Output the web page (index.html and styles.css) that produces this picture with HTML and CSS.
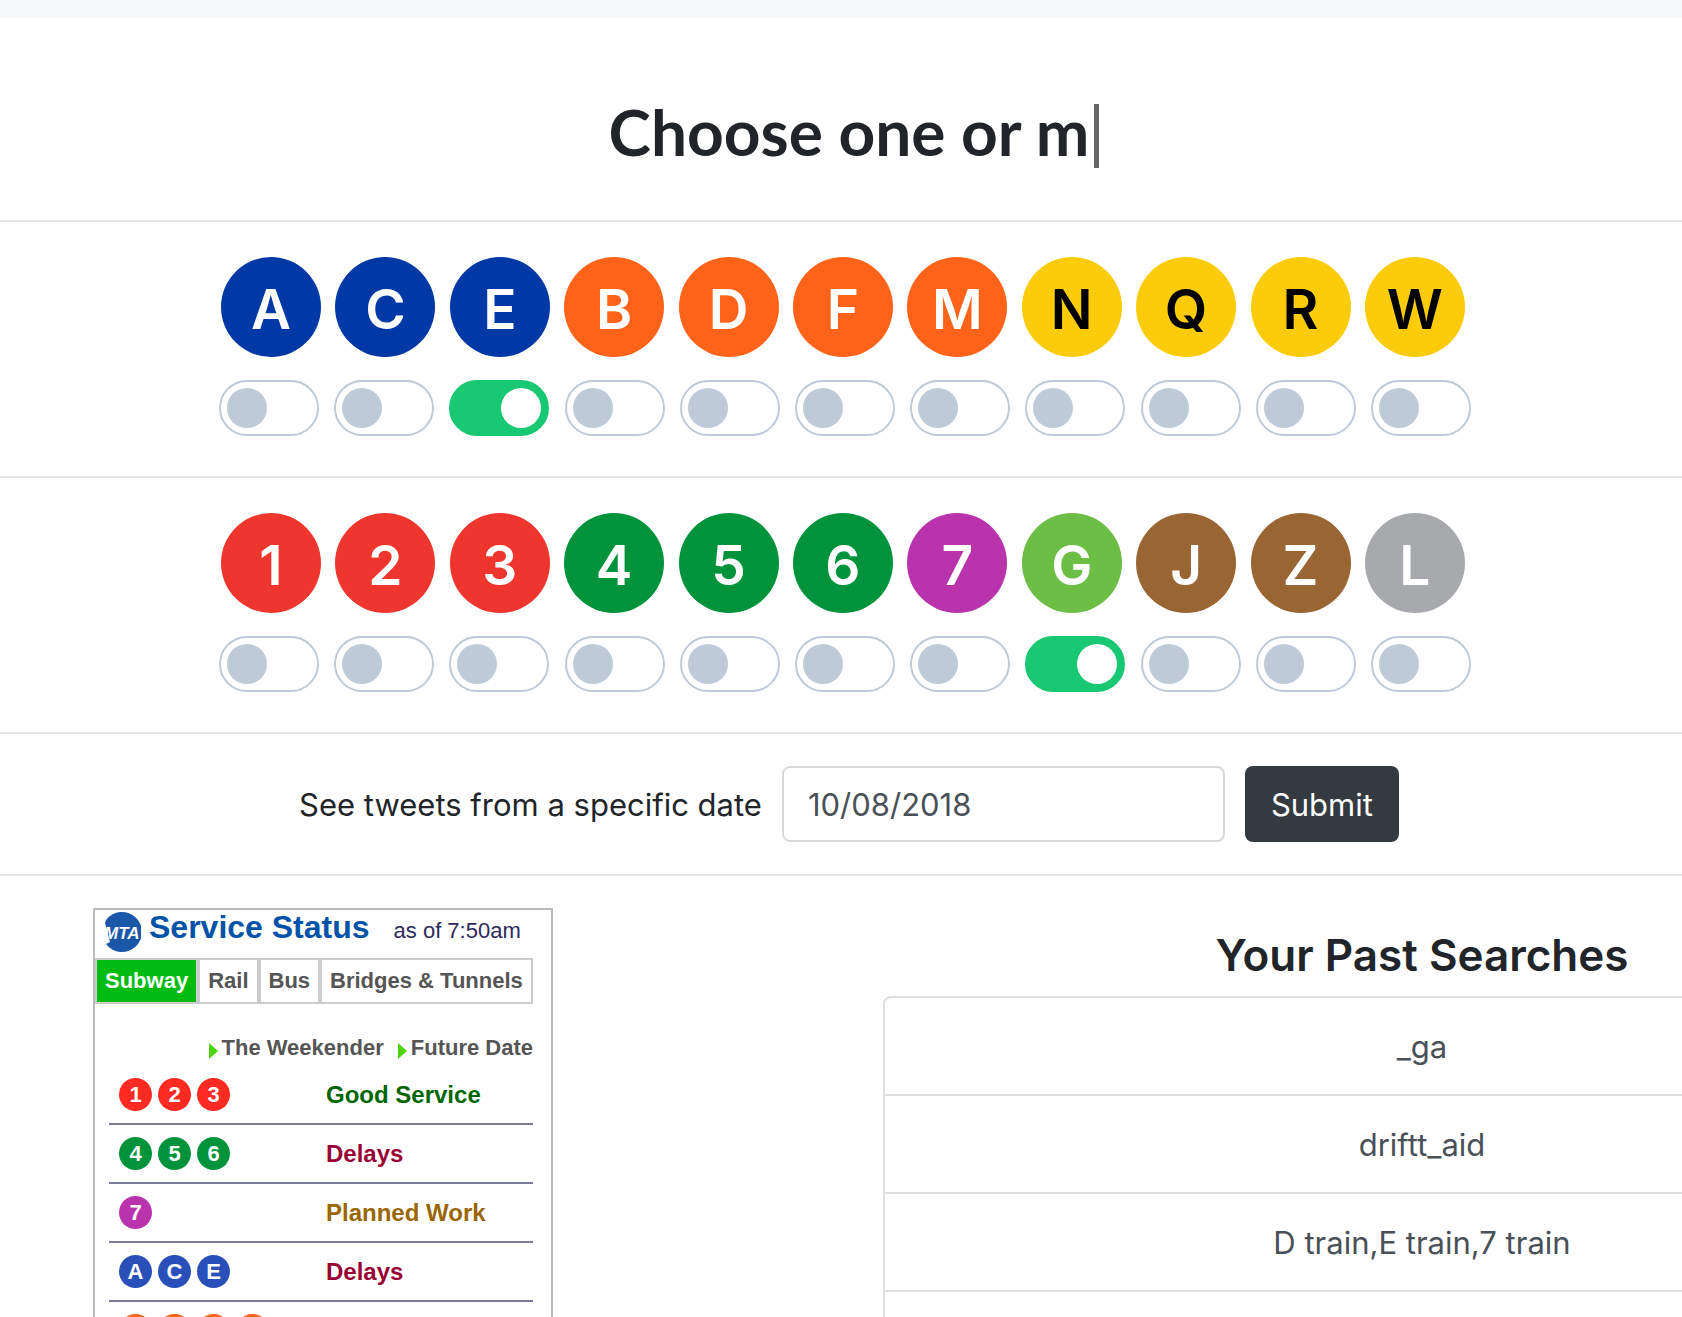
FILE: index.html
```html
<!DOCTYPE html>
<html lang="en">
<head>
    <meta charset="UTF-8">
    <meta name="viewport" content="width=device-width, initial-scale=1.0">
    <title>Train Tweets</title>
    <link rel="stylesheet" href="styles.css">
</head>
<body>
    <div class="topbar"></div>

    <header class="intro">
        <h1>Choose one or m<span class="cursor"></span></h1>
    </header>

    <form>
        <section class="trains" id="letters"></section>
        <section class="trains" id="numbers"></section>

        <section class="date-search">
            <label for="date">See tweets from a specific date</label>
            <input type="text" id="date" value="10/08/2018">
            <button type="submit">Submit</button>
        </section>
    </form>

    <main class="results">
        <div class="status">
            <div class="status-head">
                <svg class="logo" viewBox="0 0 38 42" role="img" aria-label="MTA">
                    <path d="M3 9A20 20 0 1 1 3 33L7 31L2 12Z" fill="#1b57a8"/>
                    <text x="1" y="28" class="logo-text">MTA</text>
                </svg>
                <h2>Service Status</h2>
                <span class="as-of">as of 7:50am</span>
            </div>
            <nav class="tabs">
                <a href="#subway" class="active">Subway</a>
                <a href="#rail">Rail</a>
                <a href="#bus">Bus</a>
                <a href="#bridges">Bridges &amp; Tunnels</a>
            </nav>
            <div class="links">
                <a href="#weekender">The Weekender</a>
                <a href="#future">Future Date</a>
            </div>
            <ul class="lines" id="lines"></ul>
        </div>

        <div class="searches">
            <h2>Your Past Searches</h2>
            <ul>
                <li><a href="#">_ga</a></li>
                <li><a href="#">driftt_aid</a></li>
                <li><a href="#">D train,E train,7 train</a></li>
                <li></li>
            </ul>
        </div>
    </main>

    <script>
        const colors = {
            A: 'blue', C: 'blue', E: 'blue',
            B: 'orange', D: 'orange', F: 'orange', M: 'orange',
            N: 'yellow', Q: 'yellow', R: 'yellow', W: 'yellow',
            1: 'red', 2: 'red', 3: 'red',
            4: 'green', 5: 'green', 6: 'green',
            7: 'purple', G: 'lime', J: 'brown', Z: 'brown', L: 'gray'
        };
        const selected = ['E', 'G'];

        const statuses = [
            { trains: '123', text: 'Good Service', type: 'good' },
            { trains: '456', text: 'Delays', type: 'delays' },
            { trains: '7', text: 'Planned Work', type: 'planned' },
            { trains: 'ACE', text: 'Delays', type: 'delays' },
            { trains: 'BDFM', text: '', type: 'good' }
        ];

        function showTrains(id, trains) {
            const names = trains.split('');
            document.getElementById(id).innerHTML = `
                <div class="bullets">
                    ${names.map(t => `<label class="bullet ${colors[t]}" for="train-${t}">${t}</label>`).join('')}
                </div>
                <div class="switches">
                    ${names.map(t => `<input type="checkbox" class="switch" id="train-${t}" ${selected.includes(t) ? 'checked' : ''}>`).join('')}
                </div>
            `;
        }

        showTrains('letters', 'ACEBDFMNQRW');
        showTrains('numbers', '1234567GJZL');

        document.getElementById('lines').innerHTML = statuses.map(s => `
            <li>
                <span class="line-icons">${s.trains.split('').map(t => `<span class="icon ${colors[t]}">${t}</span>`).join('')}</span>
                <a href="#" class="${s.type}">${s.text}</a>
            </li>
        `).join('');
    </script>
</body>
</html>
```
FILE: styles.css
```css
* {
    box-sizing: border-box;
}
body {
    margin: 0;
    height: 100vh;
    overflow: hidden;
    font-family: Inter, 'Liberation Sans', sans-serif;
    font-size: 31px;
    color: #212529;
    background-color: #fff;
}
h1, h2, ul {
    margin: 0;
    padding: 0;
}
ul {
    list-style: none;
}
a {
    color: inherit;
    text-decoration: none;
}
.topbar {
    height: 18px;
    background-color: #f8f9fb;
}

/* Typed heading */
.intro {
    padding: 86px 0 52px 26px;
    border-bottom: 2px solid #e5e5e5;
}
.intro h1 {
    display: flex;
    justify-content: center;
    height: 64px;
    font-family: Lato, sans-serif;
    font-size: 64px;
    font-weight: bold;
    line-height: 56px;
}
.cursor {
    width: 5px;
    margin-left: 5px;
    background-color: #666;
}

/* Train pickers */
.trains {
    padding: 35px 0 40px;
    border-bottom: 2px solid #e5e5e5;
}
.bullets,
.switches {
    display: flex;
    justify-content: space-between;
    max-width: 1248px;
    margin: 0 auto;
    padding-left: 4px;
}
.switches {
    max-width: 1260px;
    margin-top: 23px;
    padding-left: 8px;
}
.bullet {
    width: 100px;
    height: 100px;
    padding-top: 2px;
    border-radius: 50%;
    font-size: 55px;
    font-weight: 600;
    line-height: 100px;
    text-align: center;
    color: #fff;
    cursor: pointer;
}
.blue { background-color: #0039a6; }
.orange { background-color: #ff6319; }
.yellow { background-color: #fccc0a; color: #000; }
.red { background-color: #ee352e; }
.green { background-color: #00933c; }
.purple { background-color: #b933ad; }
.lime { background-color: #6cbe45; }
.brown { background-color: #996633; }
.gray { background-color: #a7a9ac; }

.switch {
    appearance: none;
    width: 100px;
    height: 56px;
    margin: 0;
    padding: 6px;
    border: 2px solid #becad7;
    border-radius: 28px;
    background-color: #fff;
    cursor: pointer;
}
.switch::before {
    content: '';
    display: block;
    width: 40px;
    height: 40px;
    border-radius: 50%;
    background-color: #becad7;
}
.switch:checked {
    border-color: #18c872;
    background-color: #18c872;
}
.switch:checked::before {
    margin-left: auto;
    background-color: #fff;
}

/* Date form */
.date-search {
    display: flex;
    justify-content: center;
    align-items: center;
    gap: 20px;
    padding: 32px 0 32px 16px;
    border-bottom: 2px solid #e5e5e5;
}
.date-search input {
    width: 443px;
    height: 76px;
    padding: 0 24px;
    border: 2px solid #d9d9d9;
    border-radius: 8px;
    font: inherit;
    color: #495057;
}
.date-search button {
    height: 76px;
    padding: 0 26px;
    border: none;
    border-radius: 8px;
    font: inherit;
    color: #fff;
    background-color: #343a40;
}

.results {
    display: flex;
    align-items: flex-start;
    padding: 32px 0 0 93px;
}

/* Service status widget */
.status {
    flex: none;
    width: 460px;
    border: 2px solid #bbb;
    font-family: 'Liberation Sans', Arial, sans-serif;
    font-size: 22px;
    font-weight: bold;
    color: #555;
}
.status-head {
    display: flex;
    align-items: baseline;
    height: 48px;
    padding-left: 8px;
}
.logo {
    align-self: flex-start;
    width: 38px;
    height: 42px;
    margin: 1px 8px 0 0;
}
.logo-text {
    font-size: 17px;
    font-style: italic;
    font-weight: bold;
    fill: #fff;
}
.status-head h2 {
    font-size: 32px;
    line-height: 34px;
    color: #0053a9;
}
.as-of {
    margin-left: 24px;
    font-weight: normal;
    color: #2d2a5c;
}
.tabs {
    display: flex;
}
.tabs a {
    height: 46px;
    padding: 0 8px;
    border: 2px solid #ccc;
    line-height: 42px;
}
.tabs .active {
    color: #fff;
    background-color: #0b1;
}
.links {
    display: flex;
    justify-content: flex-end;
    gap: 14px;
    padding: 31px 18px 0 0;
    line-height: 26px;
}
.links a::before {
    content: '';
    display: inline-block;
    margin-right: 4px;
    border-left: 9px solid #4bd50a;
    border-top: 8px solid transparent;
    border-bottom: 8px solid transparent;
    vertical-align: -4px;
}
.lines {
    margin: 5px 18px 0 14px;
}
.lines li {
    display: flex;
    align-items: center;
    height: 59px;
    border-bottom: 2px solid #7a7a99;
    font-size: 24px;
}
.line-icons {
    display: flex;
    gap: 6px;
    width: 217px;
    padding-left: 10px;
}
.icon {
    width: 33px;
    height: 33px;
    border-radius: 50%;
    font-size: 22px;
    line-height: 33px;
    text-align: center;
    color: #fff;
}
.icon.red { background-color: #ff2a22; }
.icon.blue { background-color: #2850b8; }
.good { color: #060; }
.delays { color: #903; }
.planned { color: #960; }

/* Past searches */
.searches {
    flex: none;
    width: 1078px;
    margin-left: 330px;
    text-align: center;
}
.searches h2 {
    padding-top: 18px;
    font-size: 44px;
    font-weight: 600;
    line-height: 58px;
}
.searches ul {
    margin-top: 12px;
    border: 2px solid #dfdfdf;
    border-radius: 8px;
}
.searches li {
    height: 98px;
    border-bottom: 2px solid #dfdfdf;
    line-height: 98px;
    color: #495057;
}
```
